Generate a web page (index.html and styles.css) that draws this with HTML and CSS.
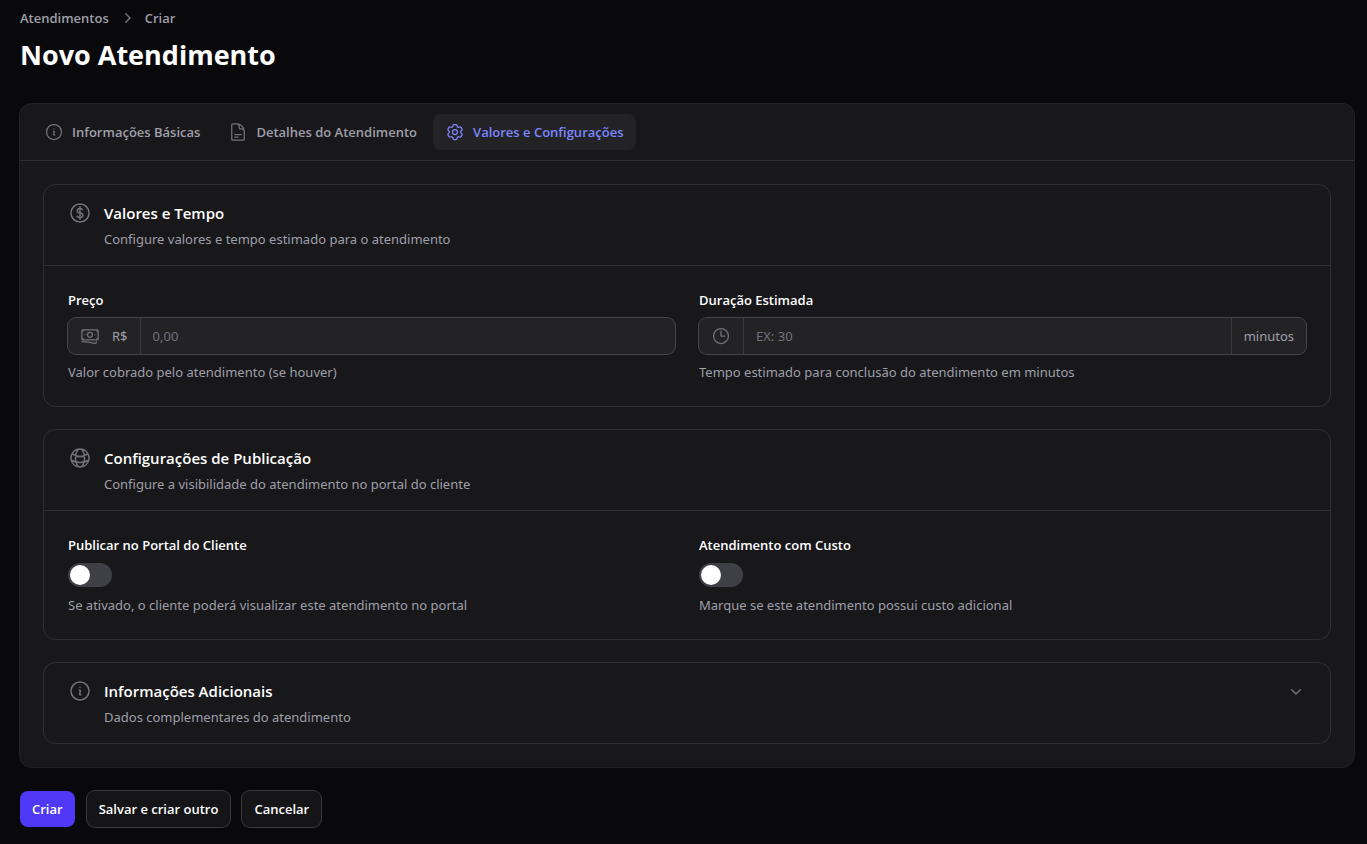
FILE: index.html
```html
<!DOCTYPE html>
<html lang="pt-BR">

<head>
    <meta charset="utf-8">
    <meta name="viewport" content="width=device-width, initial-scale=1">
    <title>Novo Atendimento</title>
    <link rel="stylesheet" href="styles.css">
</head>

<body>
    <main class="page">
        <header class="page-header">
            <nav class="breadcrumbs">
                <a href="#">Atendimentos</a>
                <svg class="icon-solid" viewBox="0 0 20 20"><path d="M8.22 5.22a.75.75 0 0 1 1.06 0l4.25 4.25a.75.75 0 0 1 0 1.06l-4.25 4.25a.75.75 0 0 1-1.06-1.06L11.94 10 8.22 6.28a.75.75 0 0 1 0-1.06Z"/></svg>
                <a href="#">Criar</a>
            </nav>
            <h1>Novo Atendimento</h1>
        </header>

        <form class="form">
            <div class="panel">
                <nav class="tabs" role="tablist">
                    <button type="button" class="tab" role="tab">
                        <svg class="icon" viewBox="0 0 24 24"><path d="m11.25 11.25.041-.02a.75.75 0 0 1 1.063.852l-.708 2.836a.75.75 0 0 0 1.063.853l.041-.021M21 12a9 9 0 1 1-18 0 9 9 0 0 1 18 0Zm-9-3.75h.008v.008H12V8.25Z"/></svg>
                        <span>Informações Básicas</span>
                    </button>
                    <button type="button" class="tab" role="tab">
                        <svg class="icon" viewBox="0 0 24 24"><path d="M19.5 14.25v-2.625a3.375 3.375 0 0 0-3.375-3.375h-1.5A1.125 1.125 0 0 1 13.5 7.125v-1.5a3.375 3.375 0 0 0-3.375-3.375H8.25m0 12.75h7.5m-7.5 3H12M10.5 2.25H5.625c-.621 0-1.125.504-1.125 1.125v17.25c0 .621.504 1.125 1.125 1.125h12.75c.621 0 1.125-.504 1.125-1.125V11.25a9 9 0 0 0-9-9Z"/></svg>
                        <span>Detalhes do Atendimento</span>
                    </button>
                    <button type="button" class="tab active" role="tab" aria-selected="true">
                        <svg class="icon" viewBox="0 0 24 24"><path d="M9.594 3.94c.09-.542.56-.94 1.11-.94h2.593c.55 0 1.02.398 1.11.94l.213 1.281c.063.374.313.686.645.87.074.04.147.083.22.127.325.196.72.257 1.075.124l1.217-.456a1.125 1.125 0 0 1 1.37.49l1.296 2.247a1.125 1.125 0 0 1-.26 1.431l-1.003.827c-.293.241-.438.613-.43.992a7.723 7.723 0 0 1 0 .255c-.008.378.137.75.43.991l1.004.827c.424.35.534.955.26 1.43l-1.298 2.247a1.125 1.125 0 0 1-1.369.491l-1.217-.456c-.355-.133-.75-.072-1.076.124a6.47 6.47 0 0 1-.22.128c-.331.183-.581.495-.644.869l-.213 1.281c-.09.543-.56.94-1.11.94h-2.594c-.55 0-1.019-.398-1.11-.94l-.213-1.281c-.062-.374-.312-.686-.644-.87a6.52 6.52 0 0 1-.22-.127c-.325-.196-.72-.257-1.076-.124l-1.217.456a1.125 1.125 0 0 1-1.369-.49l-1.297-2.247a1.125 1.125 0 0 1 .26-1.431l1.004-.827c.292-.24.437-.613.43-.991a6.932 6.932 0 0 1 0-.255c.007-.38-.138-.751-.43-.992l-1.004-.827a1.125 1.125 0 0 1-.26-1.43l1.297-2.247a1.125 1.125 0 0 1 1.37-.491l1.216.456c.356.133.751.072 1.076-.124.072-.044.146-.086.22-.128.332-.183.582-.495.644-.869l.214-1.28Z"/><path d="M15 12a3 3 0 1 1-6 0 3 3 0 0 1 6 0Z"/></svg>
                        <span>Valores e Configurações</span>
                    </button>
                </nav>

                <div class="panel-body">
                    <section class="section">
                        <header class="section-header">
                            <svg class="icon icon-lg" viewBox="0 0 24 24"><path d="M12 6v12m-3-2.818.879.659c1.171.879 3.07.879 4.242 0 1.172-.879 1.172-2.303 0-3.182C13.536 12.219 12.768 12 12 12c-.725 0-1.45-.22-2.003-.659-1.106-.879-1.106-2.303 0-3.182s2.9-.879 4.006 0l.415.33M21 12a9 9 0 1 1-18 0 9 9 0 0 1 18 0Z"/></svg>
                            <div class="section-heading">
                                <h2>Valores e Tempo</h2>
                                <p>Configure valores e tempo estimado para o atendimento</p>
                            </div>
                        </header>
                        <div class="section-body">
                            <div class="field">
                                <label for="preco">Preço</label>
                                <div class="input-group">
                                    <div class="prefix">
                                        <svg class="icon" viewBox="0 0 24 24"><path d="M2.25 18.75a60.07 60.07 0 0 1 15.797 2.101c.727.198 1.453-.342 1.453-1.096V18.75M3.75 4.5v.75A.75.75 0 0 1 3 6h-.75m0 0v-.375c0-.621.504-1.125 1.125-1.125H20.25M2.25 6v9m18-10.5v.75c0 .414.336.75.75.75h.75m-1.5-1.5h.375c.621 0 1.125.504 1.125 1.125v9.75c0 .621-.504 1.125-1.125 1.125h-.375m1.5-1.5H21a.75.75 0 0 0-.75.75v.75m0 0H3.75m0 0h-.375a1.125 1.125 0 0 1-1.125-1.125V15m1.5 1.5v-.75A.75.75 0 0 0 3 15h-.75M15 10.5a3 3 0 1 1-6 0 3 3 0 0 1 6 0Zm3 0h.008v.008H18V10.5Zm-12 0h.008v.008H6V10.5Z"/></svg>
                                        <span>R$</span>
                                    </div>
                                    <input type="text" id="preco" placeholder="0,00">
                                </div>
                                <p class="help">Valor cobrado pelo atendimento (se houver)</p>
                            </div>
                            <div class="field">
                                <label for="duracao">Duração Estimada</label>
                                <div class="input-group">
                                    <div class="prefix">
                                        <svg class="icon" viewBox="0 0 24 24"><path d="M12 6v6h4.5m4.5 0a9 9 0 1 1-18 0 9 9 0 0 1 18 0Z"/></svg>
                                    </div>
                                    <input type="text" id="duracao" placeholder="EX: 30">
                                    <div class="suffix">minutos</div>
                                </div>
                                <p class="help">Tempo estimado para conclusão do atendimento em minutos</p>
                            </div>
                        </div>
                    </section>

                    <section class="section">
                        <header class="section-header">
                            <svg class="icon icon-lg" viewBox="0 0 24 24"><path d="M12 21a9.004 9.004 0 0 0 8.716-6.747M12 21a9.004 9.004 0 0 1-8.716-6.747M12 21c2.485 0 4.5-4.03 4.5-9S14.485 3 12 3m0 18c-2.485 0-4.5-4.03-4.5-9S9.515 3 12 3m0 0a8.997 8.997 0 0 1 7.843 4.582M12 3a8.997 8.997 0 0 0-7.843 4.582m15.686 0A11.953 11.953 0 0 1 12 10.5c-2.998 0-5.74-1.1-7.843-2.918m15.686 0A8.959 8.959 0 0 1 21 12c0 .778-.099 1.533-.284 2.253m0 0A17.919 17.919 0 0 1 12 16.5c-3.162 0-6.133-.815-8.716-2.247m0 0A9.015 9.015 0 0 1 3 12c0-1.605.42-3.113 1.157-4.418"/></svg>
                            <div class="section-heading">
                                <h2>Configurações de Publicação</h2>
                                <p>Configure a visibilidade do atendimento no portal do cliente</p>
                            </div>
                        </header>
                        <div class="section-body">
                            <div class="field">
                                <label for="publicar">Publicar no Portal do Cliente</label>
                                <input type="checkbox" role="switch" class="toggle" id="publicar">
                                <p class="help">Se ativado, o cliente poderá visualizar este atendimento no portal</p>
                            </div>
                            <div class="field">
                                <label for="custo">Atendimento com Custo</label>
                                <input type="checkbox" role="switch" class="toggle" id="custo">
                                <p class="help">Marque se este atendimento possui custo adicional</p>
                            </div>
                        </div>
                    </section>

                    <section class="section">
                        <header class="section-header">
                            <svg class="icon icon-lg" viewBox="0 0 24 24"><path d="m11.25 11.25.041-.02a.75.75 0 0 1 1.063.852l-.708 2.836a.75.75 0 0 0 1.063.853l.041-.021M21 12a9 9 0 1 1-18 0 9 9 0 0 1 18 0Zm-9-3.75h.008v.008H12V8.25Z"/></svg>
                            <div class="section-heading">
                                <h2>Informações Adicionais</h2>
                                <p>Dados complementares do atendimento</p>
                            </div>
                            <button type="button" class="collapse" aria-label="Expandir" aria-expanded="false">
                                <svg class="icon-solid" viewBox="0 0 20 20"><path d="M5.22 8.22a.75.75 0 0 1 1.06 0L10 11.94l3.72-3.72a.75.75 0 1 1 1.06 1.06l-4.25 4.25a.75.75 0 0 1-1.06 0L5.22 9.28a.75.75 0 0 1 0-1.06Z"/></svg>
                            </button>
                        </header>
                    </section>
                </div>
            </div>

            <div class="actions">
                <button type="submit" class="btn btn-primary">Criar</button>
                <button type="button" class="btn">Salvar e criar outro</button>
                <button type="button" class="btn">Cancelar</button>
            </div>
        </form>
    </main>
</body>

</html>
```
FILE: styles.css
```css
* {
    box-sizing: border-box;
}

body {
    margin: 0;
    background-color: #09090b;
    color: #fff;
    font-family: "Segoe UI", "Noto Sans", "Open Sans", sans-serif;
    font-size: 13px;
    line-height: 20px;
}

h1, h2, p {
    margin: 0;
}

a {
    color: inherit;
    text-decoration: none;
}

button, input {
    font: inherit;
    color: inherit;
    margin: 0;
}

button {
    border: 0;
    background: none;
    padding: 0;
    cursor: pointer;
}

/* Open Sans has the narrower semibold */
h1, h2, label, .breadcrumbs, .tab, .btn {
    font-family: "Segoe UI", "Open Sans", "Noto Sans", sans-serif;
    font-weight: 600;
}

.page {
    padding: 8px 13px 16px 20px;
}

.page-header {
    display: flex;
    flex-direction: column;
    gap: 8px;
    margin-bottom: 30px;
}

.breadcrumbs {
    display: flex;
    align-items: center;
    gap: 8px;
    color: #9f9fa9;
}

h1 {
    font-size: 27px;
    line-height: 38px;
    font-weight: 700;
}

.icon, .icon-solid {
    width: 20px;
    height: 20px;
    flex: none;
    color: #71717b;
}

.icon {
    fill: none;
    stroke: currentColor;
    stroke-width: 1.5;
    stroke-linecap: round;
    stroke-linejoin: round;
}

.icon-solid {
    fill: currentColor;
}

.icon-lg {
    width: 24px;
    height: 24px;
}

.form {
    display: flex;
    flex-direction: column;
    gap: 24px;
}

.panel {
    background-color: #18181b;
    border-radius: 12px;
    box-shadow: 0 0 0 1px rgba(255, 255, 255, 0.1);
}

/* tabs */
.tabs {
    display: flex;
    gap: 4px;
    padding: 10px 12px;
    border-bottom: 1px solid rgba(255, 255, 255, 0.1);
}

.tab {
    display: flex;
    align-items: center;
    gap: 8px;
    padding: 8px 12px;
    border-radius: 8px;
    color: #9f9fa9;
    white-space: nowrap;
}

.tab.active {
    background-color: rgba(255, 255, 255, 0.05);
    color: #7c86ff;
}

.tab.active .icon {
    color: #7c86ff;
}

.panel-body {
    display: flex;
    flex-direction: column;
    gap: 24px;
    padding: 24px;
}

/* sections */
.section {
    border-radius: 12px;
    box-shadow: 0 0 0 1px rgba(255, 255, 255, 0.1);
}

.section-header {
    display: flex;
    gap: 12px;
    padding: 16px 24px;
}

.section-heading {
    display: flex;
    flex-direction: column;
    gap: 4px;
    flex: 1;
}

h2 {
    font-size: 15px;
    line-height: 24px;
}

.section-heading p, .help {
    color: #9f9fa9;
}

.collapse {
    display: flex;
    align-items: center;
    height: 24px;
}

.section-body {
    display: grid;
    grid-template-columns: 1fr 1fr;
    gap: 24px;
    padding: 24px;
    border-top: 1px solid rgba(255, 255, 255, 0.1);
}

/* fields */
.field {
    display: flex;
    flex-direction: column;
    align-items: flex-start;
    gap: 8px;
    min-width: 0;
}

.input-group {
    display: flex;
    width: 100%;
    height: 36px;
    border-radius: 8px;
    background-color: rgba(255, 255, 255, 0.05);
    box-shadow: 0 0 0 1px rgba(255, 255, 255, 0.2);
}

.input-group input {
    flex: 1;
    min-width: 0;
    padding: 0 12px;
    border: 0;
    outline: 0;
    background: transparent;
}

.input-group input::placeholder {
    color: #71717b;
    opacity: 1;
}

.prefix, .suffix {
    display: flex;
    align-items: center;
    gap: 12px;
    padding: 0 12px;
    color: #9f9fa9;
}

.prefix {
    border-right: 1px solid rgba(255, 255, 255, 0.1);
}

.suffix {
    border-left: 1px solid rgba(255, 255, 255, 0.1);
}

.toggle {
    appearance: none;
    width: 44px;
    height: 24px;
    padding: 2px;
    border-radius: 12px;
    background-color: #3f3f46;
    cursor: pointer;
}

.toggle::before {
    content: "";
    display: block;
    width: 20px;
    height: 20px;
    border-radius: 50%;
    background-color: #fff;
}

.toggle:checked {
    background-color: #4f39f6;
}

.toggle:checked::before {
    margin-left: 20px;
}

/* form actions */
.actions {
    display: flex;
    gap: 12px;
}

.btn {
    padding: 8px 12px;
    border-radius: 8px;
    background-color: rgba(255, 255, 255, 0.05);
    box-shadow: 0 0 0 1px rgba(255, 255, 255, 0.2);
}

.btn-primary {
    background-color: #4f39f6;
    box-shadow: none;
}
```
